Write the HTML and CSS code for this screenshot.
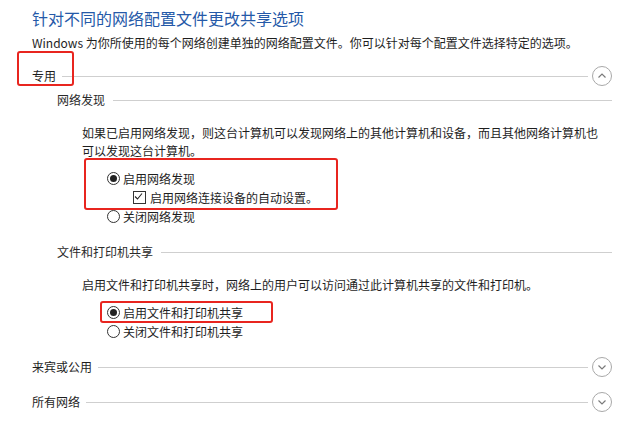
FILE: index.html
```html
<!DOCTYPE html>
<html lang="zh-CN">
<head>
  <meta charset="UTF-8" />
  <title>高级共享设置</title>
  <link rel="stylesheet" href="styles.css">
</head>
<body>
  <div class="page">
    <h1 class="title">针对不同的网络配置文件更改共享选项</h1>
    <p class="desc">Windows 为你所使用的每个网络创建单独的网络配置文件。你可以针对每个配置文件选择特定的选项。</p>

    <div class="section-head">
      <span class="label">专用</span>
      <span class="rule"></span>
      <svg class="toggle" width="20" height="20" viewBox="0 0 20 20">
        <circle cx="10" cy="10" r="9.5" fill="none" stroke="#a8a8a8" />
        <polyline points="6.5,11.5 10,8 13.5,11.5" fill="none" stroke="#7a7a7a" stroke-width="1.2" />
      </svg>
    </div>

    <div class="sub-head">
      <span class="label">网络发现</span>
      <span class="rule"></span>
    </div>
    <p class="info narrow">如果已启用网络发现，则这台计算机可以发现网络上的其他计算机和设备，而且其他网络计算机也可以发现这台计算机。</p>
    <div class="options">
      <div class="option"><span class="radio checked"></span>启用网络发现</div>
      <div class="option sub"><span class="check">
        <svg width="11" height="11" viewBox="0 0 11 11"><polyline points="2,5.5 4.5,8 9,2.5" fill="none" stroke="#222" stroke-width="1.1" /></svg>
      </span>启用网络连接设备的自动设置。</div>
      <div class="option"><span class="radio"></span>关闭网络发现</div>
    </div>

    <div class="sub-head">
      <span class="label">文件和打印机共享</span>
      <span class="rule"></span>
    </div>
    <p class="info">启用文件和打印机共享时，网络上的用户可以访问通过此计算机共享的文件和打印机。</p>
    <div class="options">
      <div class="option"><span class="radio checked"></span>启用文件和打印机共享</div>
      <div class="option"><span class="radio"></span>关闭文件和打印机共享</div>
    </div>

    <div class="section-head collapsed">
      <span class="label">来宾或公用</span>
      <span class="rule"></span>
      <svg class="toggle" width="20" height="20" viewBox="0 0 20 20">
        <circle cx="10" cy="10" r="9.5" fill="none" stroke="#a8a8a8" />
        <polyline points="6.5,8.5 10,12 13.5,8.5" fill="none" stroke="#7a7a7a" stroke-width="1.2" />
      </svg>
    </div>
    <div class="section-head collapsed last">
      <span class="label">所有网络</span>
      <span class="rule"></span>
      <svg class="toggle" width="20" height="20" viewBox="0 0 20 20">
        <circle cx="10" cy="10" r="9.5" fill="none" stroke="#a8a8a8" />
        <polyline points="6.5,8.5 10,12 13.5,8.5" fill="none" stroke="#7a7a7a" stroke-width="1.2" />
      </svg>
    </div>

    <div class="mark mark-private"></div>
    <div class="mark mark-discovery"></div>
    <div class="mark mark-sharing"></div>
  </div>
</body>
</html>
```

FILE: styles.css
```css
body {
  margin: 0;
  background-color: #ffffff;
  font-family: "Microsoft YaHei", "Noto Sans CJK SC", sans-serif;
  color: #1e1e1e;
  font-size: 12px;
}
.page {
  position: relative;
  padding: 8px 15px 0 32px;
}
.title {
  margin: 0;
  font-size: 16px;
  line-height: 20px;
  font-weight: normal;
  color: #2559a8;
}
.desc {
  margin: 7px 0 0;
  line-height: 16px;
}
.section-head {
  display: flex;
  align-items: center;
  height: 20px;
  margin-top: 15px;
}
.section-head.collapsed {
  margin-top: 16px;
}
.section-head.last {
  margin-top: 15px;
}
.section-head .label,
.sub-head .label {
  line-height: 16px;
  white-space: nowrap;
}
.rule {
  flex: 1;
  height: 1px;
  background-color: #cfcfcf;
}
.section-head .rule {
  margin: 0 4px 0 6px;
}
.toggle {
  flex: none;
  display: block;
}
.sub-head {
  display: flex;
  align-items: center;
  margin-top: 6px;
  padding-left: 25px;
  height: 16px;
  color: #2a2a2a;
}
.sub-head .rule {
  margin-left: 8px;
}
.options + .sub-head {
  margin-top: 18px;
}
.info {
  margin: 16px 0 0 50px;
  line-height: 18px;
}
.info.narrow {
  max-width: 522px;
}
.options {
  margin-top: 9px;
  padding-left: 75px;
}
.option {
  display: flex;
  align-items: center;
  height: 19px;
  line-height: 19px;
}
.option.sub {
  padding-left: 26px;
}
.radio {
  width: 11px;
  height: 11px;
  border: 1px solid #333;
  border-radius: 50%;
  margin-right: 3px;
  display: flex;
  align-items: center;
  justify-content: center;
  flex: none;
}
.radio.checked::after {
  content: "";
  width: 7px;
  height: 7px;
  border-radius: 50%;
  background-color: #222;
}
.check {
  width: 11px;
  height: 11px;
  border: 1px solid #333;
  margin-right: 4px;
  display: flex;
  flex: none;
}
.check svg {
  display: block;
  margin: -1px 0 0 -1px;
}
.mark {
  position: absolute;
  border: 2px solid #e8251f;
  border-radius: 3px;
  box-sizing: border-box;
}
.mark-private {
  left: 17px;
  top: 51px;
  width: 57px;
  height: 35px;
}
.mark-discovery {
  left: 84px;
  top: 158px;
  width: 254px;
  height: 52px;
}
.mark-sharing {
  left: 100px;
  top: 301px;
  width: 173px;
  height: 22px;
}
```
